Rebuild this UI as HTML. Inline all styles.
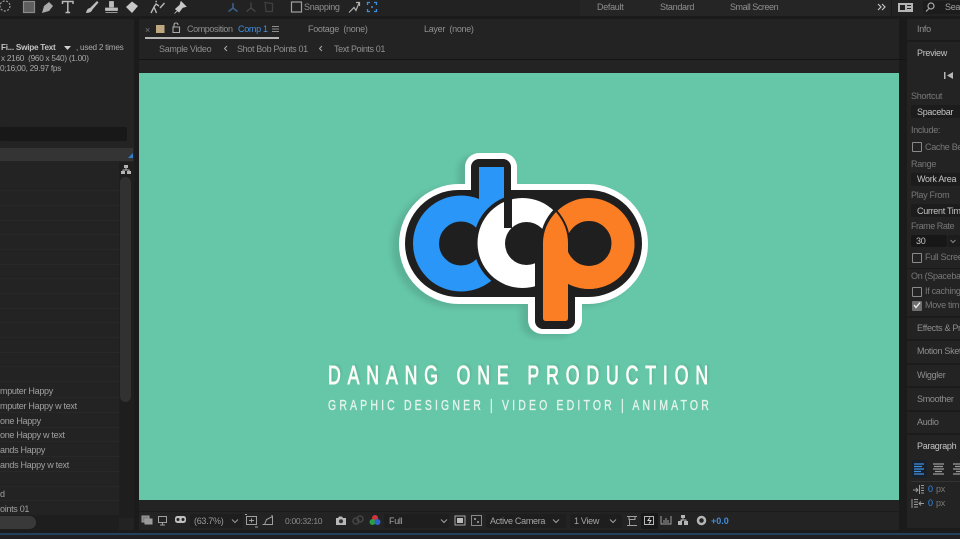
<!DOCTYPE html>
<html><head><meta charset="utf-8"><style>
html,body{margin:0;padding:0;background:#1c1c1c;width:960px;height:539px;overflow:hidden}
#r{position:absolute;left:0;top:0;width:960px;height:539px;overflow:hidden;background:#1b1b1b;font-family:"Liberation Sans",sans-serif;filter:blur(.3px)}
.b{position:absolute}
.t{position:absolute;font-size:9px;line-height:12px;color:#8f8f8f;white-space:pre;letter-spacing:-.3px}
.i{font-size:8.2px;letter-spacing:-.25px;color:#a8a8a8}
.h{color:#c4c4c4}.l{color:#2d8ceb}.d{color:#787878}
.box{position:absolute;background:#171717;border-radius:2px}
.cb{position:absolute;width:8px;height:8px;border:1px solid #8a8a8a;border-radius:1px}
.sep{position:absolute;left:907px;width:53px;height:2px;background:#1b1b1b}
.row{position:absolute;left:0;width:120px;height:1px;background:#282828}
svg{position:absolute;left:0;top:0}
</style></head><body><div id="r">
<!-- panels -->
<div class="b" style="left:0;top:0;width:960px;height:16px;background:#222"></div>
<div class="b" style="left:580px;top:0;width:310px;height:16px;background:#252525"></div>
<div class="b" style="left:0;top:19px;width:134px;height:511px;background:#232323"></div>
<div class="b" style="left:139px;top:19px;width:760px;height:40px;background:#232323"></div>
<div class="b" style="left:139px;top:59px;width:768px;height:1px;background:#151515"></div>
<div class="b" style="left:139px;top:60px;width:760px;height:451px;background:#232323"></div>
<div class="b" style="left:139px;top:512px;width:760px;height:18px;background:#232323"></div>
<div class="b" style="left:907px;top:19px;width:53px;height:509px;background:#232323"></div>
<div class="b" style="left:0;top:533px;width:960px;height:2px;background:#24405f"></div>
<div class="b" style="left:0;top:535px;width:960px;height:4px;background:#1f1f24"></div>
<div class="b" style="left:139px;top:73px;width:760px;height:427px;background:#66c6a8"></div>

<!-- left panel -->
<div class="t i h" style="left:1px;top:42px;color:#c4c4c4"><b style="font-weight:bold">Fi... Swipe Text</b></div>
<div class="t i" style="left:76px;top:42px">, used 2 times</div>
<div class="t i" style="left:1px;top:53px">x 2160  (960 x 540) (1.00)</div>
<div class="t i" style="left:0;top:63px">0;16;00, 29.97 fps</div>
<div class="b" style="left:0;top:127px;width:127px;height:14px;background:#181818;border-radius:2px"></div>
<div class="b" style="left:0;top:148px;width:133px;height:13px;background:#343434"></div>
<div class="b" style="left:119px;top:162px;width:15px;height:356px;background:#1e1e1e"></div>
<div class="b" style="left:120px;top:177px;width:11px;height:225px;background:#313131;border-radius:6px"></div>
<div class="row" style="top:190px"></div><div class="row" style="top:205px"></div><div class="row" style="top:220px"></div><div class="row" style="top:234px"></div><div class="row" style="top:249px"></div><div class="row" style="top:264px"></div><div class="row" style="top:278px"></div><div class="row" style="top:293px"></div><div class="row" style="top:308px"></div><div class="row" style="top:322px"></div><div class="row" style="top:337px"></div><div class="row" style="top:352px"></div><div class="row" style="top:366px"></div><div class="row" style="top:381px"></div><div class="row" style="top:397px"></div><div class="row" style="top:412px"></div><div class="row" style="top:427px"></div><div class="row" style="top:441px"></div><div class="row" style="top:456px"></div><div class="row" style="top:471px"></div><div class="row" style="top:486px"></div><div class="row" style="top:500px"></div>
<div class="t" style="left:0;top:385px;color:#a0a0a0">mputer Happy</div>
<div class="t" style="left:0;top:400px;color:#a0a0a0">mputer Happy w text</div>
<div class="t" style="left:0;top:415px;color:#a0a0a0">one Happy</div>
<div class="t" style="left:0;top:429px;color:#a0a0a0">one Happy w text</div>
<div class="t" style="left:0;top:444px;color:#a0a0a0">ands Happy</div>
<div class="t" style="left:0;top:459px;color:#a0a0a0">ands Happy w text</div>
<div class="t" style="left:0;top:488px;color:#a0a0a0">d</div>
<div class="t" style="left:0;top:503px;color:#a0a0a0">oints 01</div>
<div class="b" style="left:0;top:515px;width:119px;height:15px;background:#1e1e1e"></div>
<div class="b" style="left:-8px;top:516px;width:44px;height:13px;background:#393939;border-radius:7px"></div>

<!-- comp header -->
<div class="t d" style="left:145px;top:24px">×</div>
<div class="t" style="left:187px;top:23px;letter-spacing:-.4px">Composition</div>
<div class="t" style="left:238px;top:23px;color:#3f8fe0">Comp 1</div>
<div class="t" style="left:308px;top:23px">Footage  (none)</div>
<div class="t" style="left:424px;top:23px">Layer  (none)</div>
<div class="b" style="left:145px;top:37px;width:134px;height:2px;background:#b5b5b5"></div>
<div class="t" style="left:159px;top:43px">Sample Video</div>
<div class="t" style="left:237px;top:43px;letter-spacing:-.35px">Shot Bob Points 01</div>
<div class="t" style="left:334px;top:43px;letter-spacing:-.4px">Text Points 01</div>

<!-- top bar text -->
<div class="t" style="left:304px;top:1px">Snapping</div>
<div class="t" style="left:597px;top:1px">Default</div>
<div class="t" style="left:660px;top:1px">Standard</div>
<div class="t" style="left:730px;top:1px;letter-spacing:-.45px">Small Screen</div>
<div class="b" style="left:923px;top:1px;width:37px;height:13px;background:#1c1c1c;border-radius:2px"></div>
<div class="t" style="left:945px;top:1px;color:#a0a0a0">Sear</div>

<!-- right panel -->
<div class="sep" style="top:40px"></div>
<div class="t" style="left:917px;top:23px">Info</div>
<div class="t h" style="left:917px;top:47px">Preview</div>
<div class="t d" style="left:911px;top:90px">Shortcut</div>
<div class="box" style="left:911px;top:105px;width:49px;height:13px;background:#1c1c1c"></div>
<div class="t h" style="left:917px;top:106px">Spacebar</div>
<div class="t d" style="left:911px;top:124px">Include:</div>
<div class="cb" style="left:912px;top:142px"></div>
<div class="t d" style="left:925px;top:141px">Cache Bef</div>
<div class="t d" style="left:911px;top:158px">Range</div>
<div class="box" style="left:911px;top:173px;width:49px;height:13px;background:#1c1c1c"></div>
<div class="t h" style="left:917px;top:173px">Work Area</div>
<div class="t d" style="left:911px;top:189px">Play From</div>
<div class="box" style="left:911px;top:204px;width:49px;height:13px;background:#1c1c1c"></div>
<div class="t h" style="left:917px;top:205px">Current Tim</div>
<div class="t d" style="left:911px;top:220px;letter-spacing:-.45px">Frame Rate</div>
<div class="box" style="left:911px;top:235px;width:36px;height:12px"></div>
<div class="box" style="left:948px;top:235px;width:12px;height:12px;background:#1c1c1c"></div>
<div class="t h" style="left:916px;top:235px">30</div>
<div class="cb" style="left:912px;top:253px"></div>
<div class="t d" style="left:925px;top:251px">Full Scree</div>
<div class="sep" style="top:268px;height:1px;background:#191919"></div>
<div class="t d" style="left:911px;top:270px">On (Spacebar</div>
<div class="cb" style="left:912px;top:287px"></div>
<div class="t d" style="left:925px;top:285px">If caching</div>
<div class="b" style="left:912px;top:301px;width:10px;height:10px;background:#6e6e6e;border-radius:1px"></div>
<div class="t d" style="left:925px;top:299px">Move tim</div>
<div class="sep" style="top:316px"></div><div class="sep" style="top:339px"></div><div class="sep" style="top:363px"></div><div class="sep" style="top:386px"></div><div class="sep" style="top:410px"></div><div class="sep" style="top:433px"></div>
<div class="t" style="left:917px;top:322px">Effects &amp; Pr</div>
<div class="t" style="left:917px;top:345px">Motion Sket</div>
<div class="t" style="left:917px;top:369px">Wiggler</div>
<div class="t" style="left:917px;top:393px">Smoother</div>
<div class="t" style="left:917px;top:416px">Audio</div>
<div class="t h" style="left:917px;top:440px">Paragraph</div>
<div class="b" style="left:912px;top:460px;width:15px;height:18px;background:#18202b;border-radius:2px"></div>
<div class="b" style="left:911px;top:481px;width:49px;height:1px;background:#333"></div>
<div class="t l" style="left:928px;top:483px">0</div><div class="t d" style="left:936px;top:483px">px</div>
<div class="t l" style="left:928px;top:497px">0</div><div class="t d" style="left:936px;top:497px">px</div>

<!-- bottom toolbar -->
<div class="b" style="left:190px;top:514px;width:53px;height:14px;background:#1e1e1e;border-radius:2px"></div>
<div class="t" style="left:194px;top:515px;color:#9a9a9a">(63.7%)</div>
<div class="t" style="left:285px;top:515px;color:#8a8a8a;font-size:8.5px">0:00:32:10</div>
<div class="b" style="left:384px;top:514px;width:65px;height:14px;background:#1e1e1e;border-radius:2px"></div>
<div class="t" style="left:389px;top:515px;color:#a5a5a5">Full</div>
<div class="b" style="left:486px;top:514px;width:80px;height:14px;background:#1e1e1e;border-radius:2px"></div>
<div class="t" style="left:490px;top:515px;color:#a5a5a5">Active Camera</div>
<div class="b" style="left:570px;top:514px;width:52px;height:14px;background:#1e1e1e;border-radius:2px"></div>
<div class="t" style="left:574px;top:515px;color:#a5a5a5">1 View</div>
<div class="b" style="left:641px;top:513px;width:17px;height:16px;background:#181818;border-radius:2px"></div>
<div class="t" style="left:711px;top:515px;color:#3f8fe0;font-weight:bold;letter-spacing:0">+0.0</div>

<svg width="960" height="539" viewBox="0 0 960 539">
<defs>
<filter id="g" x="-20%" y="-20%" width="140%" height="140%"><feGaussianBlur stdDeviation="3"/></filter>
<filter id="g2" x="-10%" y="-50%" width="120%" height="200%"><feGaussianBlur stdDeviation="1"/></filter>
<clipPath id="lower"><rect x="560" y="243" width="90" height="60"/></clipPath>
<clipPath id="w"><rect x="470" y="190" width="65" height="110"/><rect x="535" y="190" width="40" height="53"/></clipPath>
</defs>
<!-- logo shadow -->
<g filter="url(#g)" opacity=".1" fill="#000" transform="translate(-7,3)">
<rect x="399" y="184" width="249" height="120" rx="60"/><rect x="465" y="153" width="52" height="60" rx="14"/><rect x="528" y="280" width="54" height="54" rx="14"/>
</g>
<!-- logo white + black -->
<rect x="399" y="184" width="249" height="120" rx="60" fill="#fff"/>
<rect x="465" y="153" width="52" height="60" rx="14" fill="#fff"/>
<rect x="528" y="280" width="54" height="54" rx="14" fill="#fff"/>
<rect x="405" y="190" width="237" height="107" rx="53.5" fill="#1f1f1f"/>
<rect x="471" y="159" width="40" height="60" rx="8" fill="#1f1f1f"/>
<rect x="535" y="280" width="40" height="49" rx="8" fill="#1f1f1f"/>
<!-- blue d -->
<circle cx="461" cy="243.5" r="35" fill="none" stroke="#2a96f8" stroke-width="26"/>
<rect x="479" y="167" width="25" height="50" fill="#2a96f8"/>
<!-- white -->
<circle cx="522.500" cy="243" r="49" fill="#1f1f1f"/>
<circle cx="522.500" cy="243" r="45" fill="#fff" clip-path="url(#w)"/>
<circle cx="526.500" cy="243.500" r="21.500" fill="#1f1f1f"/>
<rect x="504" y="192" width="8" height="36" fill="#1f1f1f"/>
<rect x="535" y="250" width="8" height="47" fill="#1f1f1f"/>
<!-- orange p -->
<circle cx="589" cy="243.5" r="49" fill="#1f1f1f"/>
<rect x="536" y="262" width="30" height="34" fill="#1f1f1f"/>
<circle cx="589" cy="243.5" r="34" fill="none" stroke="#fb7d24" stroke-width="23"/>
<path d="M543 318V243Q543 226 556 212Q568 226 568 243V318Q568 321 565 321H546Q543 321 543 318Z" fill="#fb7d24" stroke="#1f1f1f" stroke-width="4"/>
<circle cx="589" cy="243.5" r="34" fill="none" stroke="#fb7d24" stroke-width="23" clip-path="url(#lower)"/>
<circle cx="588" cy="243.5" r="21" fill="#1f1f1f"/>
<path d="M543 318V243Q543 226 556 212Q568 226 568 243V318Q568 321 565 321H546Q543 321 543 318Z" fill="#fb7d24"/>
<!-- logo text -->
<g font-family="'Liberation Sans',sans-serif">
<text transform="translate(330,382) scale(.68,1)" font-size="26" fill="#000" opacity=".07" textLength="559" lengthAdjust="spacing" filter="url(#g2)">DANANG ONE PRODUCTION</text>
<text transform="translate(328,384) scale(.68,1)" font-size="26" fill="#fdfdf8" stroke="#fdfdf8" stroke-width=".9" textLength="559" lengthAdjust="spacing">DANANG ONE PRODUCTION</text>
<text transform="translate(328,410) scale(.7,1)" font-size="15" fill="#e4f4ec" stroke="#e4f4ec" stroke-width=".35" textLength="544" lengthAdjust="spacing">GRAPHIC DESIGNER | VIDEO EDITOR | ANIMATOR</text>
</g>

<!-- top toolbar icons -->
<g fill="none" stroke="#9a9a9a" stroke-width="1.2">
<circle cx="5" cy="6" r="5" stroke-dasharray="2 1.5"/>
<rect x="23.500" y="1.500" width="11" height="11" fill="#5e5e5e" stroke="#8a8a8a"/>
<path d="M42 13l2-7 5-4 4 4-4 5z" fill="#aaa" stroke="none"/>
<path d="M62.500 4V1.500h10.500V4M67.800 1.500V12.500M65.500 12.500h4.600" stroke="#b8b8b8" stroke-width="1.5"/>
<path d="M86 13q1-5 4-5l7-7 1.500 1.500-6 7q-1 3.500-6.500 3.500z" fill="#bdbdbd" stroke="none"/>
<path d="M109.500 1.500h4v5.500h-4zM105.500 8h12v2.500h-12zM105.500 12.500h12" fill="#bdbdbd" stroke="#bdbdbd" stroke-width=".8"/>
<path d="M126 7l6-5.500 6 4.500-6 7z" fill="#c8c8c8" stroke="none"/>
<path d="M151 13l3-6 2.500 6M154 7l2-3 3 2M155.500 1.500h1.500M160 8l4.500-5" stroke="#b8b8b8" stroke-width="1.400"/>
<path d="M175.500 9l4.500-4 1-3.500 5 5-3.500 1-3.500 4.500zM174.500 13.500l3.500-3.500" fill="#c8c8c8" stroke="#c8c8c8" stroke-width=".8"/>
<path d="M233 3v5M233 8l-4.500 3.500M233 8l4.500 3.500" stroke="#3b5f88" stroke-width="1.6"/>
<path d="M251 2.500v5.500M251 8l-4.500 3.500M251 8l4.500 3.500" stroke="#484848"/>
<path d="M265 2.500l7.500 1v8h-6.500z" stroke="#404040"/>
<rect x="291.500" y="2" width="10" height="10" stroke="#a0a0a0"/>
<path d="M349 12.500l5-5 2 3 3-7.500M356 2.500h3.500V6" stroke="#b0b0b0"/>
<path d="M367.500 5V2.500h2.500M374 2.500h2.500V5M367.500 9v2.500h2.500M374 11.500h2.500V9" stroke="#3f8fe0" stroke-width="1.3"/>
<circle cx="372" cy="7" r="1" fill="#3f8fe0" stroke="none"/>
<path d="M878 4l3 3-3 3M882 4l3 3-3 3" stroke="#c4c4c4"/>
<circle cx="931" cy="6" r="3" stroke="#aaa"/><path d="M929 8.500l-3 3" stroke="#aaa"/>
</g>
<rect x="898" y="3" width="15" height="9" fill="#b5b5b5"/><rect x="900" y="5" width="5" height="5" fill="#222"/><rect x="907" y="5" width="4" height="1" fill="#222"/><rect x="907" y="8" width="4" height="1" fill="#222"/>
<rect x="891" y="0" width="1" height="16" fill="#1a1a1a"/>

<!-- tab icons -->
<rect x="156" y="25" width="8.500" height="8" fill="#bfa880"/>
<path d="M174 27v-2q0-2 2-2t2 2M173 27h6.500v5.500h-6.500z" fill="none" stroke="#aaa" stroke-width="1.100"/>
<path d="M272 26.500h7M272 29h7M272 31.500h7" stroke="#8e8e8e" stroke-width="1"/>
<path d="M227 46l-2.500 2.500 2.500 2.500M322 46l-2.500 2.500 2.500 2.500" fill="none" stroke="#aaa" stroke-width="1"/>
<path d="M64 46h7l-3.500 4z" fill="#d0d0d0"/>
<!-- corner triangle and flow icon -->
<path d="M133 153v5h-5z" fill="#2d7fd0"/>
<g fill="#b5b5b5"><rect x="124" y="165" width="4" height="3"/><rect x="121" y="171" width="4" height="3"/><rect x="127" y="171" width="4" height="3"/><path d="M125.500 168h1v1.500h3v2h-1v-1h-5v1h-1v-2h3z"/></g>
<!-- right panel icons -->
<path d="M944 72h1.500v7H944zM953 72v7l-6-3.500z" fill="#b5b5b5"/>
<path d="M914 305l2 2.500 4-5" fill="none" stroke="#eee" stroke-width="1.4"/>
<path d="M950.500 240l2.500 2.500 2.500-2.500" fill="none" stroke="#888"/>
<g stroke="#3f8fe0" stroke-width="1.300"><path d="M914 464h10M914 466.500h8M914 469h10M914 471.500h7M914 474h10"/></g>
<g stroke="#9a9a9a" stroke-width="1.300"><path d="M933 464h11M934 466.500h9M933 469h11M935 471.500h7M933 474h11M953 464h7M955 466.500h5M953 469h7M956 471.500h4M953 474h7"/></g>
<g stroke="#9a9a9a" stroke-width="1" fill="none"><path d="M913 490h5M916 488l2 2-2 2M919.500 485v9M921 485.500h3M921 488h3M921 490.500h3M921 493h3M912 499v9M914 499.500h4M914 502h4M914 504.500h4M914 507h4M919 503.500h5M921 501.500l-2 2 2 2"/></g>

<!-- bottom toolbar icons -->
<g fill="none" stroke="#9f9f9f" stroke-width="1">
<rect x="142" y="516" width="7" height="6" fill="#808080"/><rect x="145" y="519" width="7" height="5" fill="#999"/>
<rect x="158.500" y="516.500" width="8" height="6"/><path d="M162.500 522.500v2M160 525h5"/>
<rect x="175" y="516" width="11" height="7" rx="2.500" fill="#c0c0c0" stroke="none"/>
<circle cx="178" cy="519.500" r="1.500" fill="#232323" stroke="none"/><circle cx="183" cy="519.500" r="1.500" fill="#232323" stroke="none"/>
<path d="M232 519.500l3 3 3-3" stroke="#999"/>
<rect x="246.500" y="516.500" width="10" height="8"/><path d="M249 520.500h5M251.500 518.500v4M258 527h-3M245 514.500h2"/>
<path d="M264.500 524.500l2-5 6-3v8zM272 516.500v-1.500M264 524.500h-1.500"/>
<path d="M441 519.500l3 3 3-3M553 519.500l3 3 3-3M610 519.500l3 3 3-3"/>
<rect x="455" y="516" width="10" height="9" stroke="#aaa"/><rect x="457" y="518" width="6" height="5" fill="#bbb" stroke="none"/>
<rect x="471.500" y="515.500" width="10" height="10" stroke="#888"/>
<path d="M474 518h2v2h-2zM477 521h2v2h-2z" fill="#888" stroke="none"/>
<path d="M627 516.500h10M627 525.500h10M629 516.500v3h6v-3M629.500 519.500v6"/>
<rect x="644.500" y="516.500" width="9" height="8" stroke="#b8b8b8"/><path d="M650 517.500l-2 3h3l-2 3" stroke="#d0d0d0"/>
<path d="M661 516v8h10v-8M664 523v-3M666 523v-5M668 523v-3"/>
<circle cx="701.500" cy="520.500" r="3.500" stroke="#b5b5b5" stroke-width="2.500"/>
</g>
<g fill="#b5b5b5"><rect x="681" y="515" width="4" height="3"/><rect x="678" y="521" width="4" height="4"/><rect x="684" y="521" width="4" height="4"/><path d="M682.500 518h1v1.500h3v1.500h-1v-.5h-3v.5h-2v-1.500h2z"/></g>
<path d="M336 518h2l1-1.500h3l1 1.500h3v7h-10z" fill="#b8b8b8"/><circle cx="341" cy="521.200" r="2" fill="#333"/>
<circle cx="356" cy="521" r="3" fill="none" stroke="#454545" stroke-width="1.500"/><circle cx="360" cy="519" r="3" fill="none" stroke="#454545" stroke-width="1.500"/>
<circle cx="375" cy="518" r="3" fill="#d6323c"/><circle cx="372.500" cy="522" r="3" fill="#2d9c46"/><circle cx="377.500" cy="522" r="3" fill="#2f62c8"/>
</svg>
</div></body></html>
